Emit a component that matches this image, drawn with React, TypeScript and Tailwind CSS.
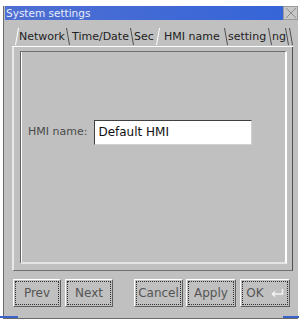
import React from "react";

const F = { fontFamily: '"DejaVu Sans", "Liberation Sans", sans-serif' };

function Slash({ dir, light }: { dir: "l" | "r"; light?: boolean }) {
  return (
    <svg width="4" height="21" viewBox="0 0 4 21" className="shrink-0">
      {dir === "l" ? (
        <line x1="0.5" y1="20" x2="3.5" y2="3" stroke={light ? "#ffffff" : "#505050"} strokeWidth="1" />
      ) : (
        <line x1="0.5" y1="3" x2="3.5" y2="20" stroke={light ? "#ffffff" : "#505050"} strokeWidth="1" />
      )}
    </svg>
  );
}

function Btn({ label, w, ok }: { label: string; w: string; ok?: boolean }) {
  return (
    <div className={`${w} h-[28px] border-t border-l border-t-white border-l-white border-b border-r border-b-[#606060] border-r-[#606060] p-[1px]`}>
      <div className="w-full h-full border border-dotted border-[#303030] flex items-center justify-center gap-[6px] text-[12px] text-[#555]">
        <span>{label}</span>
        {ok && (
          <svg width="14" height="10" viewBox="0 0 14 10">
            <path d="M12.5 1 V6 H3" stroke="#f4f4f4" strokeWidth="1.5" fill="none" />
            <path d="M5 3.5 L2.5 6 L5 8.5" stroke="#f4f4f4" strokeWidth="1.5" fill="none" />
          </svg>
        )}
      </div>
    </div>
  );
}

export default function App() {
  return (
    <div className="w-[299px] h-[322px] bg-white overflow-hidden relative" style={F}>
      <div className="ml-[3px] mt-[6px] w-[295px] h-[313px] bg-[#c0c0c0] border-l border-[#6a6a6a] border-b flex flex-col">
        {/* title */}
        <div className="flex h-[14px] pl-[1px]">
          <div className="flex-1 bg-gradient-to-r from-[#4f6fd2] to-[#3565d8] text-[#e8ecf8] text-[10.5px] leading-[13px] pl-[1px] pt-[1px]">
            System settings
          </div>
          <div className="w-[15px] h-[14px] bg-[#c8c8c8] border border-[#9a9a9a] flex items-center justify-center">
            <svg width="12" height="12" viewBox="0 0 12 12">
              <path d="M1 1 L11 11 M11 1 L1 11" stroke="#8a8a8a" strokeWidth="1" />
            </svg>
          </div>
        </div>
        {/* tab widget */}
        <div className="mt-[6px] ml-[8px] mr-[5px] flex flex-col">
          <div className="h-[21px] flex items-end text-[11px] text-[#222] leading-[13px] border-b border-white whitespace-nowrap">
            <div className="w-[3px] shrink-0" />
            <Slash dir="l" light />
            <span className="pb-[3px] w-[47px] shrink-0">Network</span>
            <Slash dir="r" />
            <span className="pb-[3px] pl-[2px] w-[60px] shrink-0">Time/Date</span>
            <Slash dir="r" />
            <span className="pb-[3px] w-[22px] shrink-0">Sec</span>
            <Slash dir="l" light />
            <span className="pb-[3px] pl-[4px] w-[64px] shrink-0">HMI name</span>
            <Slash dir="r" />
            <span className="pb-[3px] w-[40px] shrink-0">setting</span>
            <Slash dir="r" />
            <span className="pb-[3px] w-[13px] shrink-0">ng</span>
            <Slash dir="r" />
            <Slash dir="r" />
          </div>
          <div className="h-[224px] border-l-2 border-l-[#e8e8e8] border-r border-r-[#505050] border-b border-b-[#707070] pl-[6px] pr-[5px] pt-[4px] pb-[6px]">
            <div className="h-full border-t border-l border-t-[#707070] border-l-[#606060] border-r-2 border-b-2 border-r-white border-b-[#e4e4e4]">
              <div className="h-full border-l border-l-white flex items-center pl-[6px] pb-[50px]">
                <span className="text-[11px] text-[#4a4a4a] mr-[7px]">HMI name:</span>
                <div className="w-[158px] h-[25px] bg-white border-t border-l border-[#404040] border-r border-b border-r-[#d0d0d0] border-b-[#d0d0d0] flex items-center pl-[3px] text-[12px] text-[#111]">
                  Default HMI
                </div>
              </div>
            </div>
          </div>
        </div>
        {/* buttons */}
        <div className="flex items-center mt-[8px] ml-[9px]">
          <Btn label="Prev" w="w-[48px]" />
          <div className="w-[4px]" />
          <Btn label="Next" w="w-[48px]" />
          <div className="w-[21px]" />
          <Btn label="Cancel" w="w-[49px]" />
          <div className="w-[3px]" />
          <Btn label="Apply" w="w-[50px]" />
          <div className="w-[4px]" />
          <Btn label="OK" w="w-[50px]" ok />
        </div>
      </div>
      <div className="absolute left-0 top-[316px] w-[18px] h-[2px] bg-[#3a62c8]" />
      <div className="absolute right-0 top-[316px] w-[16px] h-[2px] bg-[#3a62c8]" />
    </div>
  );
}
